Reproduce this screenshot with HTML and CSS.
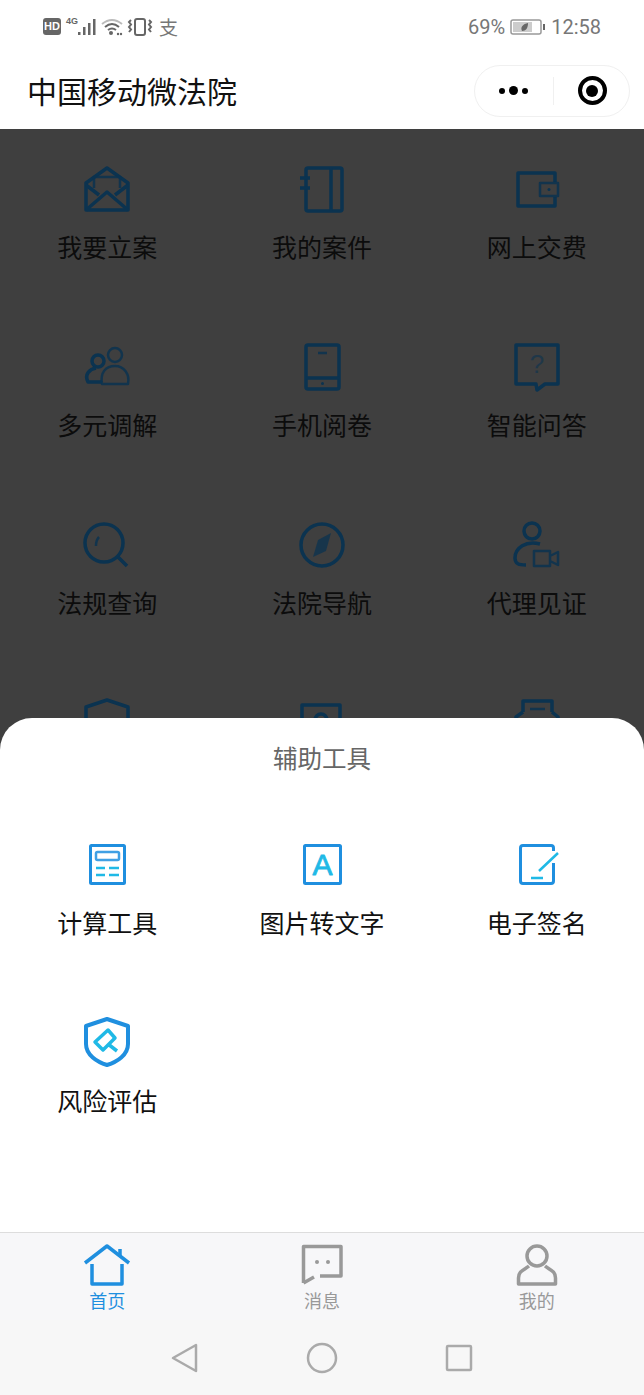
FILE: index.html
```html
<!DOCTYPE html>
<html lang="zh-CN">

<head>
    <meta charset="UTF-8">
    <meta name="viewport" content="width=device-width, initial-scale=1.0">
    <title>中国移动微法院</title>
    <link rel="stylesheet" href="styles.css">
</head>

<body>
    <div class="page">
        <div class="status-bar">
            <div class="status-left">
                <span class="hd">HD</span>
                <span class="net">4G</span>
                <svg class="bars" width="20" height="20" viewBox="0 0 20 20">
                    <rect x="1" y="15" width="2.5" height="3" />
                    <rect x="6" y="10" width="2.5" height="8" />
                    <rect x="11" y="6" width="2.5" height="12" />
                    <rect x="16" y="2" width="2.5" height="16" />
                </svg>
                <svg class="stat-ico" width="24" height="20" viewBox="0 0 24 20">
                    <path class="faint" d="M2 7 Q12 -1 22 7" />
                    <path d="M5 10 Q12 4 19 10" />
                    <path d="M8 13 Q12 10 16 13" />
                    <circle class="solid" cx="11" cy="16" r="2" />
                    <circle class="solid" cx="18" cy="17" r="1.2" />
                    <circle class="solid" cx="21" cy="17" r="1.2" />
                </svg>
                <svg class="stat-ico" width="26" height="20" viewBox="0 0 26 20">
                    <rect x="8" y="2" width="10" height="16" rx="2" />
                    <path d="M4 3 l-2 2 l2 2.500 l-2 2.500 l2 2.500 l-2 2.500" />
                    <path d="M22 3 l2 2 l-2 2.500 l2 2.500 l-2 2.500 l2 2.500" />
                </svg>
                <span class="glyph">支</span>
            </div>
            <div class="status-right">
                <span>69%</span>
                <svg class="stat-ico" width="36" height="18" viewBox="0 0 36 18">
                    <rect x="1" y="2" width="30" height="14" rx="2" />
                    <rect class="solid pale" x="3" y="4" width="19" height="10" />
                    <path class="solid" d="M12 13 C10 9 13 6 18 5 C18 10 16 13 12 13 Z" />
                    <rect class="solid" x="33" y="6" width="2" height="6" />
                </svg>
                <span>12:58</span>
            </div>
        </div>

        <header class="title-bar">
            <div class="app-title">中国移动微法院</div>
            <div class="capsule">
                <div class="capsule-part">
                    <span class="dot"></span><span class="dot big"></span><span class="dot"></span>
                </div>
                <div class="capsule-line"></div>
                <div class="capsule-part capsule-right">
                    <span class="target"></span>
                </div>
            </div>
        </header>

        <main class="content">
            <div class="grid dim">
                <div class="cell">
                    <svg class="ico" viewBox="0 0 50 50">
                        <path d="M4 19 L25 4 L46 19 V46 H4 Z" />
                        <path d="M4 46 L25 28 L46 46 M4 21 L17 31 M46 21 L33 31" />
                        <path class="thin" d="M12 24 V13 H38 V24" />
                    </svg>
                    <div class="label">我要立案</div>
                </div>
                <div class="cell">
                    <svg class="ico" viewBox="0 0 50 50">
                        <rect x="9" y="4" width="36" height="43" rx="2" />
                        <path d="M34 4 V47 M3 14 H13 M3 24 H13" />
                    </svg>
                    <div class="label">我的案件</div>
                </div>
                <div class="cell">
                    <svg class="ico" viewBox="0 0 50 50">
                        <path d="M43 18 V9 H6 V42 H43 V33" />
                        <path class="thin" d="M28 19 H46 V32 H28 Z" />
                        <circle class="fill" cx="37" cy="25.500" r="1.500" />
                    </svg>
                    <div class="label">网上交费</div>
                </div>
                <div class="cell">
                    <svg class="ico" viewBox="0 0 50 50">
                        <circle class="thin" cx="33" cy="13" r="7" />
                        <path class="thin" d="M20 42 C18 30 24 24 33 24 C42 24 48 32 46 42 Z" />
                        <circle cx="16" cy="19" r="6" />
                        <path d="M20 40 H6 C2 32 8 27 14 26" />
                    </svg>
                    <div class="label">多元调解</div>
                </div>
                <div class="cell">
                    <svg class="ico" viewBox="0 0 50 50">
                        <rect x="9" y="3" width="33" height="44" rx="2" />
                        <path d="M9 36 H42" />
                        <path class="thin" d="M21 11 H30" />
                        <circle class="fill" cx="25.500" cy="41.500" r="1.500" />
                    </svg>
                    <div class="label">手机阅卷</div>
                </div>
                <div class="cell">
                    <svg class="ico" viewBox="0 0 50 50">
                        <path d="M4 3 H46 V42 H33 L25 48 L24 42 H4 Z" />
                        <text class="ico-text" x="25" y="31" text-anchor="middle">?</text>
                    </svg>
                    <div class="label">智能问答</div>
                </div>
                <div class="cell">
                    <svg class="ico" viewBox="0 0 50 50">
                        <circle cx="22" cy="23" r="19" />
                        <path d="M36 37 L45 46" />
                        <path class="thin" d="M14 26 C14 22 15 19 17 17" />
                    </svg>
                    <div class="label">法规查询</div>
                </div>
                <div class="cell">
                    <svg class="ico" viewBox="0 0 50 50">
                        <circle cx="25" cy="25" r="21" />
                        <path class="fill soft" d="M34 13 L29 31 L16 37 L21 20 Z" />
                    </svg>
                    <div class="label">法院导航</div>
                </div>
                <div class="cell">
                    <svg class="ico" viewBox="0 0 50 50">
                        <circle cx="20" cy="11" r="8" />
                        <path d="M28 24 C14 20 3 28 3 38 C3 44 7 45 14 45" />
                        <path class="thin" d="M22 31 H38 V46 H22 Z M38 36 L46 32 V45 L38 41" />
                    </svg>
                    <div class="label">代理见证</div>
                </div>
                <div class="cell">
                    <svg class="ico" viewBox="0 0 50 50">
                        <path d="M4 9 L25 2 L46 9 V30 C46 40 34 46 25 48 C16 46 4 40 4 30 Z" />
                    </svg>
                </div>
                <div class="cell">
                    <svg class="ico" viewBox="0 0 50 50">
                        <rect x="5" y="7" width="38" height="40" />
                        <circle cx="24" cy="22" r="6" />
                    </svg>
                </div>
                <div class="cell">
                    <svg class="ico" viewBox="0 0 50 50">
                        <path d="M11 14 V3 H40 V14 M11 14 L4 19 V46 H46 V19 L40 14" />
                        <path class="thin" d="M18 11 H33" />
                    </svg>
                </div>
            </div>

            <section class="sheet">
                <div class="sheet-title">辅助工具</div>
                <div class="grid tools">
                    <div class="cell">
                        <svg class="ico" viewBox="0 0 50 50">
                            <rect x="8.500" y="6.500" width="34" height="38" rx="1" />
                            <rect class="thin" x="14" y="13" width="23" height="8" rx="1.500" />
                            <path class="thin accent" d="M14 29 H23 M27 29 H37 M14 36 H23 M27 36 H37" />
                        </svg>
                        <div class="label">计算工具</div>
                    </div>
                    <div class="cell">
                        <svg class="ico" viewBox="0 0 50 50">
                            <rect x="7.500" y="6.500" width="36" height="38" rx="1" />
                            <text class="ico-text letter" x="25.500" y="36" text-anchor="middle">A</text>
                        </svg>
                        <div class="label">图片转文字</div>
                    </div>
                    <div class="cell">
                        <svg class="ico" viewBox="0 0 50 50">
                            <path d="M41.500 12 V9 Q41.500 6.500 39 6.500 H11 Q8.500 6.500 8.500 9 V42 Q8.500 44.500 11 44.500 H39 Q41.500 44.500 41.500 42 V24" />
                            <path class="thin accent" d="M46 14 L27 32 M19 39 H31" />
                        </svg>
                        <div class="label">电子签名</div>
                    </div>
                    <div class="cell">
                        <svg class="ico shield" viewBox="0 0 50 50">
                            <path d="M4 9 L25 2 L46 9 V27 C46 38 35 45 25 48 C15 45 4 38 4 27 Z" />
                            <path class="thin accent" d="M13 25 L26 13 L33 21 L21 33 Z M26 27 L35 34" />
                        </svg>
                        <div class="label">风险评估</div>
                    </div>
                </div>
            </section>
        </main>

        <nav class="tab-bar">
            <div class="tab active">
                <svg class="tab-ico" viewBox="0 0 50 44">
                    <path d="M3 20 L25 3 L47 20" />
                    <path d="M10 21 V41 H40 V21 M38 6 V13" />
                </svg>
                <div class="tab-label">首页</div>
            </div>
            <div class="tab">
                <svg class="tab-ico" viewBox="0 0 50 44">
                    <path d="M6.500 40 V3.500 H44 V33 H23 M6.500 40 L17 34" />
                    <circle class="tab-dot" cx="20" cy="19" r="2" />
                    <circle class="tab-dot" cx="31" cy="19" r="2" />
                </svg>
                <div class="tab-label">消息</div>
            </div>
            <div class="tab">
                <svg class="tab-ico" viewBox="0 0 50 44">
                    <circle cx="25" cy="13" r="10" />
                    <path d="M17 23 C12 27 6.500 28 6.500 35 V41 H43.500 V35 C43.500 28 38 27 33 23" />
                </svg>
                <div class="tab-label">我的</div>
            </div>
        </nav>

        <div class="nav-bar">
            <svg class="nav-ico" width="30" height="32" viewBox="0 0 30 32">
                <path d="M26 3 V29 L3 16 Z" />
            </svg>
            <svg class="nav-ico" width="32" height="32" viewBox="0 0 32 32">
                <circle cx="16" cy="16" r="14" />
            </svg>
            <svg class="nav-ico" width="30" height="32" viewBox="0 0 30 32">
                <rect x="3" y="4" width="24" height="24" rx="1" />
            </svg>
        </div>
    </div>
</body>

</html>
```

FILE: styles.css
```css
* {
    box-sizing: border-box;
}

body {
    margin: 0;
    font-family: "Noto Sans CJK SC", "Liberation Sans", sans-serif;
    color: #111;
}

.page {
    display: flex;
    flex-direction: column;
    height: 100vh;
    background-color: #fff;
    overflow: hidden;
}

/* status bar */
.status-bar {
    display: flex;
    align-items: center;
    justify-content: space-between;
    height: 55px;
    padding: 0 43px 2px 43px;
    color: #777;
}

.status-left,
.status-right {
    display: flex;
    align-items: center;
}

.hd {
    width: 18px;
    height: 17px;
    border-radius: 3px;
    background-color: #666;
    color: #fff;
    font: bold 11px/17px "Liberation Sans", sans-serif;
    text-align: center;
}

.net {
    align-self: flex-start;
    margin: -2px 0 0 5px;
    font: bold 9px/12px "Liberation Sans", sans-serif;
    color: #666;
}

.bars {
    margin: 0 3px 0 -1px;
    fill: #666;
}

.stat-ico {
    fill: none;
    stroke: #666;
    stroke-width: 2;
    margin-right: 3px;
}

.stat-ico .faint {
    stroke: #bbb;
}

.stat-ico .solid {
    fill: #666;
    stroke: none;
}

.stat-ico .pale {
    fill: #ccc;
}

.glyph {
    margin-left: 3px;
    font-size: 19px;
    line-height: 20px;
    color: #777;
}

.status-right {
    gap: 5px;
    margin-right: 0;
    font: 20px/24px "Roboto", "Liberation Sans", sans-serif;
}

.status-right .stat-ico {
    margin: 0;
    stroke-width: 1.5;
    stroke: #999;
}

/* title bar */
.title-bar {
    display: flex;
    align-items: center;
    justify-content: space-between;
    height: 74px;
    padding: 0 14px 0 27px;
}

.app-title {
    margin-top: -4px;
    font-size: 30px;
    line-height: 40px;
    color: #111;
}

.capsule {
    display: flex;
    align-items: center;
    width: 156px;
    height: 52px;
    margin-top: -3px;
    border: 1.500px solid #f0f0f0;
    border-radius: 26px;
}

.capsule-part {
    display: flex;
    flex: 1;
    align-items: center;
    justify-content: center;
    gap: 4px;
}

.capsule-right {
    flex: none;
    width: 75.500px;
    padding-left: 2px;
}

.capsule-line {
    width: 1px;
    height: 28px;
    background-color: #f0f0f0;
}

.dot {
    width: 6px;
    height: 6px;
    border-radius: 50%;
    background-color: #000;
}

.dot.big {
    width: 9px;
    height: 9px;
}

.target {
    position: relative;
    width: 29px;
    height: 29px;
    border: 4px solid #000;
    border-radius: 50%;
}

.target::after {
    content: "";
    position: absolute;
    left: 4.500px;
    top: 4.500px;
    width: 12px;
    height: 12px;
    border-radius: 50%;
    background-color: #000;
}

/* page content */
.content {
    position: relative;
    flex: 1;
    background-color: #3f3f3f;
    overflow: hidden;
}

.grid {
    display: grid;
    grid-template-columns: repeat(3, 1fr);
    grid-auto-rows: 178px;
}

.dim {
    padding-top: 35px;
    color: #0b3350;
}

.dim .label {
    color: #0c0c0c;
}

.tools {
    padding-top: 64px;
    color: #1f8fdf;
}

.tools .label {
    margin-top: 16px;
    color: #111;
}

.cell {
    display: flex;
    flex-direction: column;
    align-items: center;
}

.ico {
    width: 50px;
    height: 50px;
    fill: none;
    stroke: currentColor;
    stroke-width: 3.500;
    stroke-linejoin: round;
}

.tools .ico {
    stroke-width: 3;
}

.tools .shield {
    stroke-width: 4;
}

.ico .thin {
    stroke-width: 2.500;
    opacity: 0.85;
}

.ico .accent {
    stroke: #1fb9e6;
    opacity: 1;
}

.shield .accent {
    stroke-width: 3.500;
}

.ico .fill {
    fill: currentColor;
    stroke: none;
}

.ico .soft {
    opacity: 0.75;
}

.ico-text {
    font: 26px "Liberation Sans", sans-serif;
    fill: currentColor;
    stroke: none;
    opacity: 0.6;
}

.ico-text.letter {
    font-size: 30px;
    fill: #1fb9e6;
    stroke: #1fb9e6;
    stroke-width: 0.8;
    opacity: 1;
}

.label {
    margin-top: 15px;
    font-size: 25px;
    line-height: 34px;
    white-space: nowrap;
}

/* bottom sheet */
.sheet {
    position: absolute;
    left: 0;
    right: 0;
    bottom: 0;
    height: 514px;
    border-radius: 32px 32px 0 0;
    background-color: #fff;
    color: #111;
}

.sheet-title {
    padding-top: 23px;
    font-size: 24.500px;
    line-height: 34px;
    text-align: center;
    color: #666;
}

/* tab bar */
.tab-bar {
    display: grid;
    grid-template-columns: repeat(3, 1fr);
    height: 88px;
    padding-top: 10px;
    border-top: 1px solid #ddd;
    background-color: #f7f7f9;
    color: #999;
}

.tab {
    display: flex;
    flex-direction: column;
    align-items: center;
}

.tab.active {
    color: #1f8fdf;
}

.tab-ico {
    width: 50px;
    height: 44px;
    fill: none;
    stroke: currentColor;
    stroke-width: 3.500;
    stroke-linejoin: round;
}

.tab-ico .tab-dot {
    fill: currentColor;
    stroke: none;
}

.tab-label {
    margin-top: 1px;
    font-size: 18px;
    line-height: 24px;
}

/* android nav bar */
.nav-bar {
    display: flex;
    align-items: center;
    justify-content: center;
    gap: 106px;
    height: 75px;
    padding: 1px 0 0 0;
    background-color: #f7f7f7;
}

.nav-ico {
    fill: none;
    stroke: #aaa;
    stroke-width: 2.500;
    stroke-linejoin: round;
}
```
